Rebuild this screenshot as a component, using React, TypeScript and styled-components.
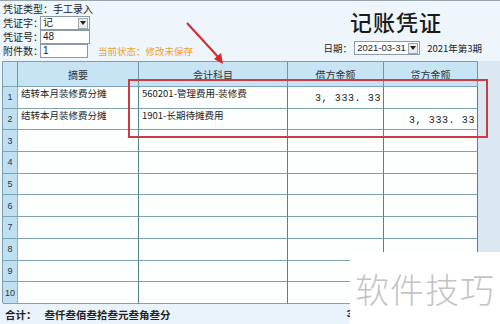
import React from "react";
import styled, { createGlobalStyle } from "styled-components";

const GlobalStyle = createGlobalStyle`
  html, body { margin: 0; padding: 0; background: #eef5fb; }
  body { font-family: "Noto Sans CJK SC", "Noto Sans", sans-serif; color: #222; }
  * { box-sizing: border-box; }
`;

const Page = styled.div`
  position: relative;
  width: 500px;
  height: 324px;
  overflow: hidden;
  background: #eef5fb;
  border-top: 1px solid #9aa4ae;
`;

const Top = styled.div`
  height: 60px;
  display: flex;
  justify-content: space-between;
`;

const FormCol = styled.div`
  padding: 1px 0 0 3px;
  display: flex;
  flex-direction: column;
  font-size: 10px;
`;

const FormRow = styled.div`
  display: flex;
  align-items: center;
  height: 14px;
  line-height: 14px;
  white-space: nowrap;
`;

const Label = styled.span`
  width: 37px;
  font-size: 10px;
`;

const Field = styled.div<{ $w: number }>`
  width: ${(p) => p.$w}px;
  height: 14px;
  border: 1px solid #8a9aa8;
  background: #fff;
  font-size: 10px;
  line-height: 12px;
  padding-left: 2px;
  display: flex;
  align-items: center;
  justify-content: space-between;
  white-space: nowrap;
  font-family: "Liberation Sans", "Noto Sans CJK SC", sans-serif;
`;

const DropBtn = styled.span`
  flex: none;
  width: 10px;
  height: 11px;
  margin-right: 1px;
  border: 1px solid #9aa;
  background: #e8ecef;
  display: flex;
  align-items: center;
  justify-content: center;
`;

const Status = styled.span`
  margin-left: 10px;
  color: #f0a030;
  font-size: 9.5px;
`;

const TitleCol = styled.div`
  display: flex;
  flex-direction: column;
  align-items: flex-end;
  padding-right: 18px;
`;

const Title = styled.div`
  font-size: 22px;
  letter-spacing: 1px;
  margin: 7px 40px 0 0;
  line-height: 26px;
  color: #1a1a1a;
  font-family: "Noto Sans CJK SC", sans-serif;
  font-weight: 500;
`;

const DateRow = styled.div`
  display: flex;
  align-items: center;
  font-size: 9.5px;
  margin-top: 7px;
  gap: 2px;
  white-space: nowrap;
`;

const DateText = styled.span`
  font-size: 9.5px;
`;

const Period = styled.span`
  margin-left: 5px;
  font-size: 9.5px;
`;

const Body = styled.div`
  display: flex;
  height: 242px;
`;

const Table = styled.div`
  margin-left: 2px;
  width: 476px;
  display: grid;
  grid-template-columns: 15px 121px 149px 96px 94px;
  grid-template-rows: 25px repeat(10, 21.7px);
  border-left: 1px solid #7e9fae;
  border-top: 1px solid #7e9fae;
  background: #fdfefe;
`;

const Head = styled.div`
  background: #c6e4f4;
  border-right: 1px solid #6f98a6;
  border-bottom: 1px solid #7fa2b0;
  font-size: 10px;
  color: #333;
  display: flex;
  align-items: center;
  justify-content: center;
`;

const NumCell = styled.div`
  background: #bfe0f3;
  border-right: 1px solid #8fb0bf;
  border-bottom: 1px solid #7fa2b0;
  font-size: 9px;
  color: #333;
  display: flex;
  align-items: center;
  justify-content: center;
  font-family: "Liberation Sans", sans-serif;
`;

const Cell = styled.div<{ $right?: boolean }>`
  border-right: 1px solid #4f8391;
  border-bottom: 1px solid #7fa2b0;
  font-size: 9.5px;
  line-height: 12px;
  color: #222;
  padding: ${(p) => (p.$right ? "0 2px 0 0" : "0 0 0 3px")};
  display: flex;
  align-items: ${(p) => (p.$right ? "center" : "flex-start")};
  justify-content: ${(p) => (p.$right ? "flex-end" : "flex-start")};
  white-space: pre;
  overflow: hidden;
`;

const Amount = styled.span`
  font-family: "Liberation Mono", monospace;
  font-size: 10px;
  letter-spacing: 0.6px;
  margin-top: 3px;
  white-space: pre;
`;

const Side = styled.div`
  flex: 1;
  background: #dbe8f2;
`;

const Footer = styled.div`
  width: 350px;
  height: 22px;
  background: #eaf3fb;
  display: flex;
  align-items: center;
  padding-left: 5px;
  font-weight: 700;
  font-size: 10.5px;
  gap: 8px;
  overflow: hidden;
  white-space: nowrap;
`;

const FooterTotal = styled.span`
  margin-left: 168px;
  font-family: "Liberation Mono", monospace;
  font-size: 10px;
`;

const RedBox = styled.div`
  position: absolute;
  left: 128px;
  top: 78px;
  width: 360px;
  height: 59px;
  border: 2px solid #cc3a44;
  pointer-events: none;
`;

const Arrow = styled.svg`
  position: absolute;
  left: 180px;
  top: 18px;
`;

const Watermark = styled.div`
  position: absolute;
  left: 350px;
  top: 251px;
  width: 150px;
  height: 73px;
  background: #fff;
  color: #c4c4c4;
  font-size: 34px;
  display: flex;
  align-items: center;
  justify-content: center;
  letter-spacing: 1px;
  font-weight: 300;
`;

const Caret = () => (
  <svg width="6" height="4" viewBox="0 0 6 4">
    <path d="M0 0 L6 0 L3 4 Z" fill="#222" />
  </svg>
);

type Row = { summary?: string; account?: string; debit?: string; credit?: string };
const rows: Row[] = [
  { summary: "结转本月装修费分摊", account: "560201-管理费用-装修费", debit: "3, 333. 33" },
  { summary: "结转本月装修费分摊", account: "1901-长期待摊费用", credit: "3, 333. 33" },
  {}, {}, {}, {}, {}, {}, {}, {},
];

export default function App() {
  return (
    <>
      <GlobalStyle />
      <Page>
        <Top>
          <FormCol>
            <FormRow>凭证类型：手工录入</FormRow>
            <FormRow>
              <Label>凭证字：</Label>
              <Field $w={50}>
                记
                <DropBtn><Caret /></DropBtn>
              </Field>
            </FormRow>
            <FormRow>
              <Label>凭证号：</Label>
              <Field $w={50}>48</Field>
            </FormRow>
            <FormRow>
              <Label>附件数：</Label>
              <Field $w={48}>1</Field>
              <Status>当前状态：修改未保存</Status>
            </FormRow>
          </FormCol>
          <TitleCol>
            <Title>记账凭证</Title>
            <DateRow>
              日期：
              <Field $w={66}>
                <DateText>2021-03-31</DateText>
                <DropBtn><Caret /></DropBtn>
              </Field>
              <Period>2021年第3期</Period>
            </DateRow>
          </TitleCol>
        </Top>
        <Body>
          <Table>
            <Head />
            <Head>摘要</Head>
            <Head>会计科目</Head>
            <Head>借方金额</Head>
            <Head>贷方金额</Head>
            {rows.map((r, i) => (
              <React.Fragment key={i}>
                <NumCell>{i + 1}</NumCell>
                <Cell>{r.summary}</Cell>
                <Cell>{r.account}</Cell>
                <Cell $right>{r.debit && <Amount>{r.debit}</Amount>}</Cell>
                <Cell $right>{r.credit && <Amount>{r.credit}</Amount>}</Cell>
              </React.Fragment>
            ))}
          </Table>
          <Side />
        </Body>
        <Footer>
          <span>合计：</span>
          <span>叁仟叁佰叁拾叁元叁角叁分</span>
          <FooterTotal>3,333.33</FooterTotal>
        </Footer>
        <RedBox />
        <Arrow width="50" height="50" viewBox="0 0 50 50">
          <line x1="7" y1="4" x2="40" y2="40" stroke="#d8262c" strokeWidth="2" />
          <path d="M43 45 L34 40 L41 34 Z" fill="#d8262c" />
        </Arrow>
        <Watermark>软件技巧</Watermark>
      </Page>
    </>
  );
}
